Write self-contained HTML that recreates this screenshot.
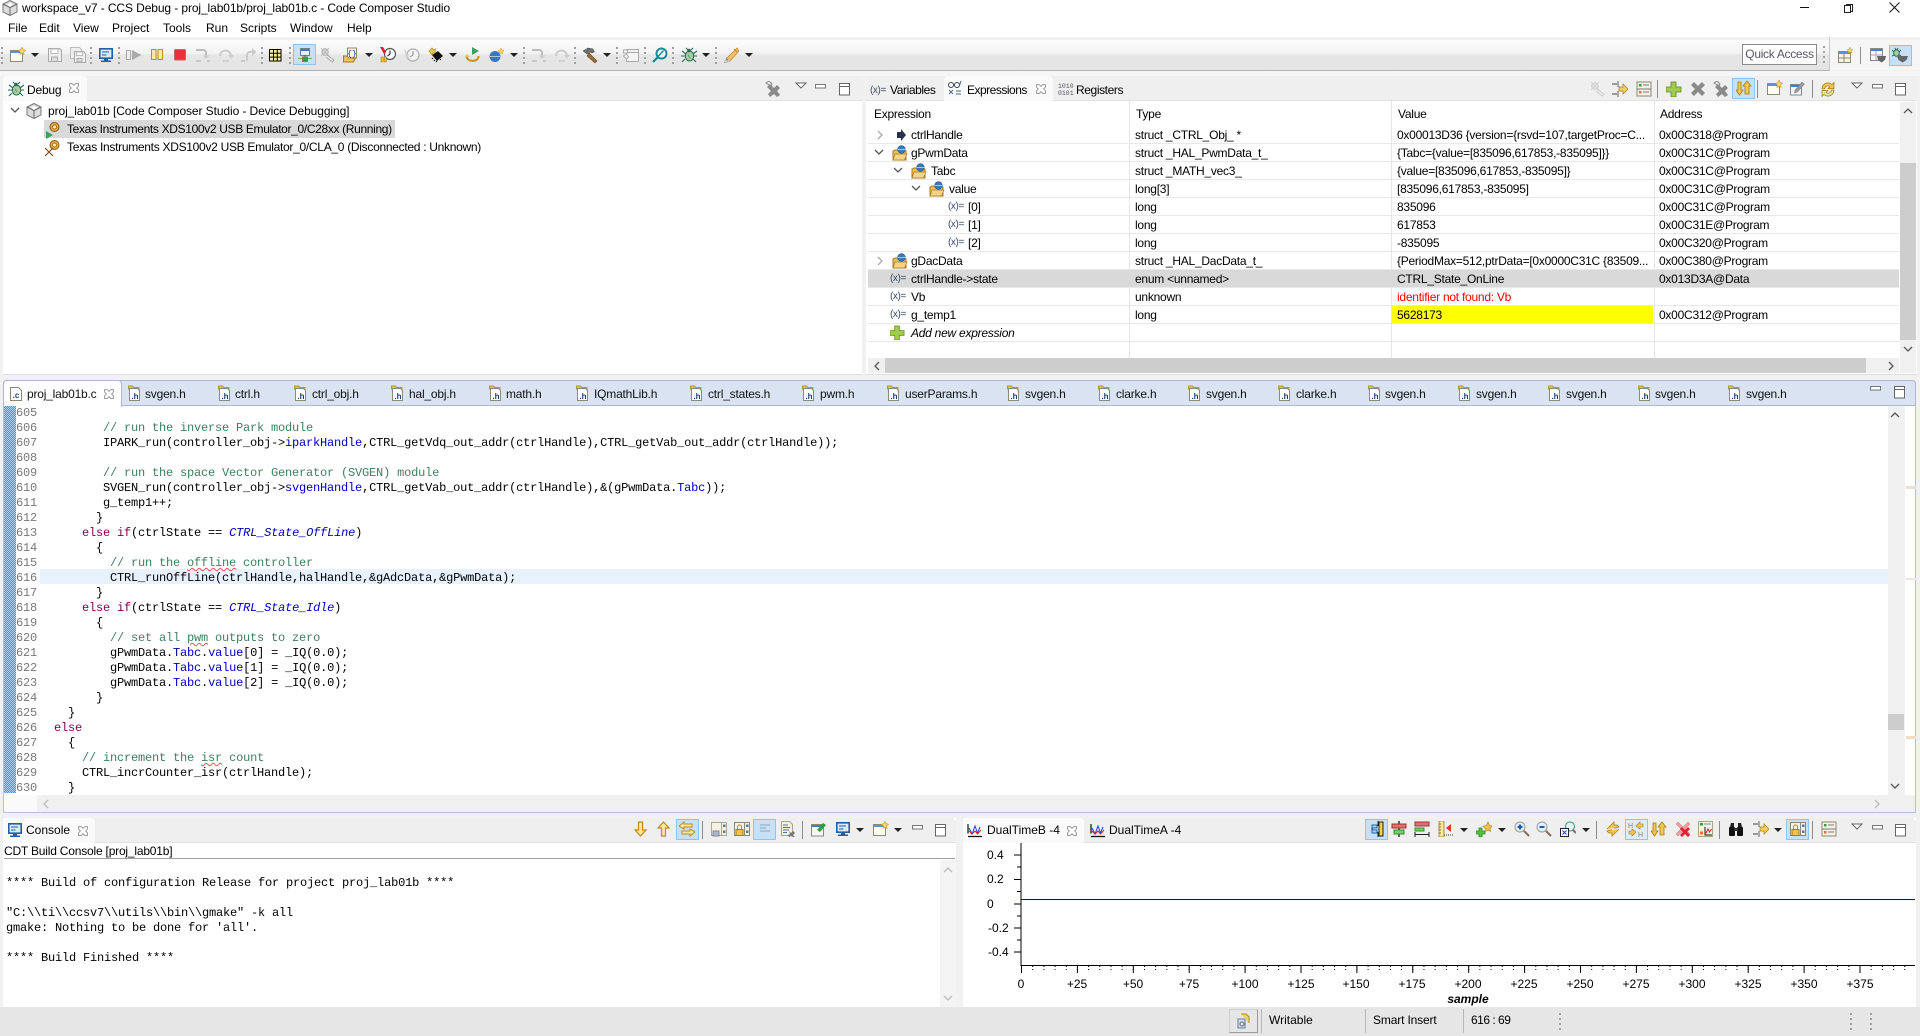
<!DOCTYPE html>
<html><head><meta charset="utf-8"><title>workspace_v7 - CCS Debug</title>
<style>
html,body{margin:0;padding:0}
body{position:relative;width:1920px;height:1036px;overflow:hidden;background:#f1f1f1;font:12px "Liberation Sans",sans-serif;color:#000}
div,span,b,pre,svg{position:absolute}
b{font-weight:normal;white-space:nowrap}
.x{white-space:nowrap}
.i{width:16px;height:16px}
.dd{width:0;height:0;border-left:4px solid transparent;border-right:4px solid transparent;border-top:4px solid #222;margin-left:-4px}
.g{width:2px;height:17px;background:repeating-linear-gradient(#a0a0a0 0 2px,transparent 2px 5px)}
.s{width:1px;background:#8c8c8c}
.sel{background:#c7e0f5;border:1px solid #90c3ee;box-sizing:border-box}
.band{background:#efefef;border-bottom:1px solid #e2e2e2;box-sizing:border-box;border-radius:4px 4px 0 0}
.tab{background:#fafafa;border-radius:4px 4px 0 0}
.r{left:868px;width:1031px;height:17px;border-bottom:1px solid #e8e8e8}
.r b{top:1px;line-height:16px;letter-spacing:-.25px}
.t{left:267px}.v{left:529px}.a{left:791px}
.h{letter-spacing:-.25px}
.vr{font-size:10px;color:#3a4a6a;line-height:16px;white-space:nowrap;top:1px;letter-spacing:-.4px}
pre{margin:0;font:12px/15px "Liberation Mono",monospace;letter-spacing:-.2px}
.c{color:#3f7f5f}.k{color:#7f0055}.f{color:#0000c0}.e{color:#0000c0;font-style:italic}
.w{text-decoration:underline wavy #e55 1px;text-underline-offset:1px}
.et{top:387px;font-size:12px;color:#111;white-space:nowrap;letter-spacing:-.2px}
.ch{top:977px;transform:translateX(-50%);white-space:nowrap}
.yl{left:987px;white-space:nowrap}
</style></head><body>
<svg width="0" height="0" style="left:0;top:0"><defs>
<symbol id="nw" viewBox="0 0 16 16"><rect x=".5" y="3.5" width="12" height="11" fill="#fffdf0" stroke="#8a8a78"/><rect x="1" y="4" width="11" height="2" fill="#5b92d6"/><path d="M12 0l1 2.5 2.5.8-2 1.7.5 2.5-2-1.3-2 1.3.5-2.5-2-1.7 2.5-.8z" fill="#f8d878" stroke="#c89a30" stroke-width=".6"/></symbol>
<symbol id="sv" viewBox="0 0 16 16"><path d="M1.5 1.5h11l2 2v11h-13z" fill="#eee" stroke="#aaa"/><rect x="4" y="2" width="7" height="4.5" fill="#fafafa" stroke="#bbb"/><rect x="4.5" y="10" width="6" height="4.5" fill="#ddd" stroke="#aaa"/></symbol>
<symbol id="sa" viewBox="0 0 16 16"><path d="M.5.5h9l2 2v9h-11z" fill="#eee" stroke="#bbb"/><path d="M4.5 4.5h9l2 2v9h-11z" fill="#eee" stroke="#aaa"/><rect x="6.5" y="5" width="6" height="3.5" fill="#fafafa" stroke="#bbb"/><rect x="7" y="11.5" width="5" height="3.5" fill="#ddd" stroke="#aaa"/></symbol>
<symbol id="tm" viewBox="0 0 16 16"><rect x="1.8" y="1.8" width="12.4" height="9.4" fill="#dce8f5" stroke="#1f5fa5" stroke-width="1.6"/><path d="M4 5h7M4 8h4.5" stroke="#1f5fa5"/><rect x="6" y="12" width="4" height="1.5" fill="#1f5fa5"/><rect x="3" y="13.5" width="10" height="1.5" fill="#1f5fa5"/></symbol>
<symbol id="rs" viewBox="0 0 16 16"><rect x=".5" y="3.5" width="4" height="9" fill="#eee" stroke="#aaa"/><path d="M6 3l9.5 5-9.5 5z" fill="#aaa"/></symbol>
<symbol id="ps" viewBox="0 0 16 16"><rect x="2.5" y="2.5" width="4.5" height="10" fill="#f7e9ab" stroke="#b8901e"/><rect x="9" y="2.5" width="4.5" height="10" fill="#f7e9ab" stroke="#b8901e"/></symbol>
<symbol id="st" viewBox="0 0 16 16"><rect x="2.5" y="2.5" width="11" height="10.5" rx="1" fill="#ea2e3a" stroke="#c8666a"/></symbol>
<symbol id="si" viewBox="0 0 16 16"><path d="M1 3h7a3 3 0 0 1 3 3v3" fill="none" stroke="#bbb" stroke-width="2"/><path d="M7.5 8.5h7l-3.500 3.500z" fill="#ccc"/><path d="M1 14h5M12 14h3" stroke="#aaa"/></symbol>
<symbol id="so" viewBox="0 0 16 16"><path d="M2 9a5.500 5.500 0 0 1 11 0" fill="none" stroke="#ccc" stroke-width="2"/><path d="M10 8h6l-3 3.500z" fill="#ccc"/><path d="M5 14h6" stroke="#bbb"/></symbol>
<symbol id="sr" viewBox="0 0 16 16"><path d="M6 14V8a3 3 0 0 1 3-3h3" fill="none" stroke="#ccc" stroke-width="2"/><path d="M11 1l4.500 4-4.500 4z" fill="#ccc"/><path d="M0 14h4" stroke="#aaa"/></symbol>
<symbol id="gr" viewBox="0 0 16 16"><rect x="2.500" y="2.500" width="11.500" height="11.500" fill="#ffe9a8" stroke="#000"/><path d="M6.500 2.500v11.500M10.300 2.500v11.500M2.500 6.300h11.500M2.500 10.100h11.500" stroke="#000"/></symbol>
<symbol id="cn" viewBox="0 0 16 16"><rect x="3.500" y="1.500" width="9" height="7" fill="#e8eef6" stroke="#6b7f9a"/><rect x="4" y="2" width="8" height="2" fill="#3f78c0"/><path d="M1 11.500h14" stroke="#8a6" stroke-width="1"/><path d="M8 8v3" stroke="#555"/><rect x="5.500" y="10" width="5" height="4.500" fill="#3f9a3f" stroke="#8a7a50"/></symbol>
<symbol id="cd" viewBox="0 0 16 16"><circle cx="5" cy="5" r="3.200" fill="#ddd" stroke="#aaa"/><path d="M1 1l8 8M9 1l-8 8" stroke="#bbb"/><path d="M7 8l7 5-1.500 2-6.500-5" fill="#eee" stroke="#aaa"/></symbol>
<symbol id="op" viewBox="0 0 16 16"><rect x="4.500" y="1" width="9" height="10" fill="#f6f4e6" stroke="#8a8a70"/><text x="9" y="9" font-size="8" text-anchor="middle" fill="#1e50a0" font-family="Liberation Mono">{}</text><path d="M.5 9h4l1 2h6l1 0-2 4h-10z" fill="#eec060" stroke="#a87a20"/></symbol>
<symbol id="ck" viewBox="0 0 16 16"><circle cx="10" cy="7" r="5.500" fill="#fff" stroke="#555" stroke-width="1.200"/><path d="M10 3.500v3.500l-2.500 2" fill="none" stroke="#111"/><path d="M0 0l4 7 2-2-3-5z" fill="#e0202c"/><rect x="1" y="10" width="2.200" height="5" fill="#eec040" stroke="#a07a10" stroke-width=".5"/><rect x="4.200" y="10" width="2.200" height="5" fill="#eec040" stroke="#a07a10" stroke-width=".5"/></symbol>
<symbol id="k2" viewBox="0 0 16 16"><circle cx="9" cy="8" r="6" fill="#f4f4f4" stroke="#aaa" stroke-width="1.200"/><path d="M9 4v4l-3 2" fill="none" stroke="#888"/><path d="M0 2l5 6-2 5z" fill="#ccc"/></symbol>
<symbol id="ch" viewBox="0 0 16 16"><path d="M4 8l6-4 5 5-6 5z" fill="#111"/><path d="M5 11l-1 1M7 13l-1 1M9 14l-1 1M12 12l1 1" stroke="#111"/><path d="M1 4l3-3 1.500 2 2-1-.5 3-2 1-1 2z" fill="#f0c848" stroke="#b08a20" stroke-width=".7"/></symbol>
<symbol id="ga" viewBox="0 0 16 16"><path d="M7 0l7 4-7 4z" fill="#3ca060"/><path d="M1.500 9c0 6 12 7 12 0" fill="none" stroke="#c8901e" stroke-width="2"/><path d="M0 10l2-3 2.500 3z" fill="#eec050"/></symbol>
<symbol id="bl" viewBox="0 0 16 16"><circle cx="6" cy="9.500" r="5.500" fill="#3c78b8"/><path d="M.8 9.500h10.400" stroke="#a8c8e8"/><path d="M12 1l1 2 2 .7-1.600 1.300.4 2-1.800-1-1.800 1 .4-2-1.600-1.300 2-.7z" fill="#f8d878" stroke="#c89a30" stroke-width=".5"/></symbol>
<symbol id="hm" viewBox="0 0 16 16"><path d="M1 4l5-3 5 1 1.500 3-3 1-1.500-1-3 2z" fill="#6e6e6e" stroke="#444" stroke-width=".5"/><path d="M7 6l8 8-2 2-8-7z" fill="#9a6a38" stroke="#6e4820" stroke-width=".6"/></symbol>
<symbol id="wd" viewBox="0 0 16 16"><rect x="3.500" y="2.500" width="12" height="12" fill="#f4f4f4" stroke="#aaa"/><path d="M3.500 5.500h12" stroke="#aaa"/><path d="M.5 3h4v3h-4zM.5 9l3-2 2 3-2 2z" fill="#fff" stroke="#aaa"/></symbol>
<symbol id="sc" viewBox="0 0 16 16"><circle cx="9.500" cy="6.500" r="5" fill="#fff" stroke="#178a9a" stroke-width="2"/><path d="M6 9.500l5.500-6" stroke="#178a9a" stroke-width="1.500"/><path d="M5.500 10.500l-4.500 4.500" stroke="#178a9a" stroke-width="2.200"/></symbol>
<symbol id="bg" viewBox="0 0 16 16"><ellipse cx="8.500" cy="9" rx="4.200" ry="5" fill="#a6cf98" stroke="#2c6a60"/><circle cx="8" cy="3.500" r="1.800" fill="#2c6a60"/><path d="M1 4l4 3M16 4l-4 3M0 9h4M16 9h-3M1 15l3-3M15 15l-3-3M5 1l2 2M12 1l-2 2" stroke="#2c6a60" stroke-width="1.100"/><path d="M7 8l2 3" stroke="#5a9070"/></symbol>
<symbol id="pn" viewBox="0 0 16 16"><path d="M14 1l2 3-9 10-3-3z" fill="#f2c068" stroke="#c08020" stroke-width=".7"/><path d="M11 2l3 3" stroke="#c08020"/><path d="M4 10.500l3 3.500-6 2z" fill="#f4e2c0" stroke="#aaa" stroke-width=".7"/><path d="M3 11l2 1-1 3z" fill="#777"/></symbol>
<symbol id="pr" viewBox="0 0 16 16"><rect x=".5" y="4.500" width="12" height="11" fill="#f8f4e4" stroke="#8a8a70"/><rect x="1" y="5" width="11" height="2" fill="#5b92d6"/><path d="M6 7v8M1 11h11" stroke="#8a8a70"/><path d="M12 0l1 2 2 .7-1.500 1.300.4 2-1.900-1-1.900 1 .4-2-1.500-1.300 2-.7z" fill="#f8d878" stroke="#c89a30" stroke-width=".5"/></symbol>
<symbol id="p2" viewBox="0 0 16 16"><rect x=".5" y="1.500" width="12" height="12" fill="#f8f8f8" stroke="#8a8a8a"/><rect x="1" y="2" width="11" height="2" fill="#4a82c8"/><path d="M6 4v9M1 8h11" stroke="#aaa"/><path d="M7 9h9l-1 4-3.500 2.500L8 13z" fill="#666"/></symbol>
<symbol id="p3" viewBox="0 0 16 16"><ellipse cx="4.500" cy="6" rx="2.800" ry="3.300" fill="#a6cf98" stroke="#2c6a60"/><path d="M0 3l2 2M9 3L7 5M0 9l2-1M9 9L7 8M3 1l1 2M6 1L5 3" stroke="#2c6a60"/><path d="M5 9h11l-1.500 4-4 2.500-4-2.500z" fill="#666"/></symbol>
<symbol id="cl" viewBox="0 0 16 16"><path d="M3 3h3l2 2 2-2h3v3l-2 2 2 2v3h-3l-2-2-2 2H3v-3l2-2-2-2z" fill="#fff" stroke="#8a8a8a"/></symbol>
<symbol id="mn" viewBox="0 0 16 16"><rect x="2.500" y="5.500" width="10" height="3.500" fill="#fff" stroke="#777"/></symbol>
<symbol id="mx" viewBox="0 0 16 16"><rect x="2.500" y="2.500" width="10" height="11.500" fill="#fff" stroke="#666"/><path d="M2.500 5.500h10" stroke="#666"/></symbol>
<symbol id="vm" viewBox="0 0 16 16"><path d="M3 5h10l-5 5z" fill="#fff" stroke="#666"/></symbol>
<symbol id="xx" viewBox="0 0 16 16"><path d="M1 4l3-3 4 4 4-4 3 3-4 4 4 4-3 3-4-4-4 4-3-3 4-4z" fill="#8a8a8a"/></symbol>
<symbol id="x2" viewBox="0 0 16 16"><path d="M1 2l3-2 3 3-1 2z" fill="#f0f0f0" stroke="#888"/><path d="M2 6l3-3 4 4 3-3 3 3-3 3 3 4-3 2-3-3-4 3-2-3 3-3z" fill="#8a8a8a"/></symbol>
<symbol id="pl" viewBox="0 0 16 16"><path d="M5 1h5v5h5v5h-5v5H5v-5H0V6h5z" fill="#9fcb50" stroke="#5a8a20" stroke-width=".8"/></symbol>
<symbol id="dn" viewBox="0 0 16 16"><path d="M5.500 1h4v8h3.500l-5.500 6-5.500-6h3.500z" fill="#fde8a0" stroke="#c08a18" stroke-width="1.200"/></symbol>
<symbol id="up" viewBox="0 0 16 16"><path d="M5.500 15h4V7h3.500L7.500 1 2 7h3.500z" fill="#fde8a0" stroke="#c08a18" stroke-width="1.200"/></symbol>
<symbol id="lk" viewBox="0 0 16 16"><path d="M0 5l5-4v2h8v3H5v2zM16 11l-5 4v-2H3v-3h8V8z" fill="#fde8a0" stroke="#c08a18"/></symbol>
<symbol id="cs" viewBox="0 0 16 16"><rect x=".5" y="1.500" width="15" height="13" fill="#f6f2e0" stroke="#aaa890"/><path d="M10.500 1.500v13" stroke="#aaa890"/><rect x="12" y="3.500" width="2.500" height="2.500" fill="#5a7a9a"/><rect x="12" y="9.500" width="2.500" height="2.500" fill="#5a7a9a"/><path d="M2 10h6v5H2z" fill="#aab8cc" stroke="#889"/></symbol>
<symbol id="cb" viewBox="0 0 16 16"><rect x=".5" y="1.500" width="15" height="13" fill="#f6f2e0" stroke="#8a8a70"/><path d="M10.500 1.500v13" stroke="#8a8a70"/><rect x="12" y="3.500" width="2.500" height="2.500" fill="#5a7a9a"/><rect x="12" y="9.500" width="2.500" height="2.500" fill="#5a7a9a"/><path d="M3.500 9V6a2 2 0 0 1 4 0v3" fill="none" stroke="#b8860b"/><rect x="2" y="8.500" width="7" height="6" fill="#f0c050" stroke="#a87a10"/></symbol>
<symbol id="ln" viewBox="0 0 16 16"><path d="M3 4h10M3 7h6M3 10h10" stroke="#8da4bc"/></symbol>
<symbol id="ds" viewBox="0 0 16 16"><path d="M1.500.5h8l3 3v11h-11z" fill="#f6f2e0" stroke="#a8a488"/><path d="M3 4h5M3 6.500h7M3 9h6M3 11.500h4" stroke="#4a72a8"/><path d="M9 10l2 2 2-2 2 2-2 2 2 2h-2l-2-1-2 1-1-2 2-1z" fill="#777"/></symbol>
<symbol id="pn2" viewBox="0 0 16 16"><rect x=".5" y="3.500" width="12" height="11.500" fill="#f4f8fc" stroke="#8a8a70"/><rect x="1" y="4" width="11" height="2" fill="#3f7ec2"/><path d="M6 9l6-7 3 2-6 7z" fill="#2ca040"/></symbol>
<symbol id="pn3" viewBox="0 0 16 16"><rect x=".5" y="4.500" width="11" height="10.500" fill="#f4f8fc" stroke="#7a8a9a"/><rect x="1" y="5" width="10" height="2" fill="#3f7ec2"/><path d="M5 10l7-8 2.500 2-7 8-3 1z" fill="#999" stroke="#777" stroke-width=".5"/></symbol>
<symbol id="sy" viewBox="0 0 16 16"><path d="M2 8a6 6 0 0 1 10-4.500l2-2v6h-6l2-2A3.500 3.500 0 0 0 4.500 8z" fill="#f2c850" stroke="#9a7a10" stroke-width=".7"/><path d="M14 9a6 6 0 0 1-10 4.500l-2 2v-6h6l-2 2a3.500 3.500 0 0 0 5.500-2.500z" fill="#dfe8a0" stroke="#9a7a10" stroke-width=".7"/></symbol>
<symbol id="ud" viewBox="0 0 16 16"><path d="M2 15V7H0l3.500-5L7 7H5v8z" transform="rotate(180 3.500 8.500)" fill="#f2c850" stroke="#a87a10" stroke-width=".8"/><path d="M9 14V6H7l4-5 4 5h-2v8z" fill="#f2c850" stroke="#a87a10" stroke-width=".8"/></symbol>
<symbol id="t1" viewBox="0 0 16 16"><path d="M1 2v9.500M1 14.500h14" stroke="#111" stroke-width="1.200"/><path d="M2 6l3 6 3-8 2.500 7L13 5" fill="none" stroke="#2040d0" stroke-width="1"/><path d="M2 9l3 3 3-3 2.500 3L14 8" fill="none" stroke="#d02020"/></symbol>
<symbol id="hc" viewBox="0 0 16 16"><path d="M9 0v5M9 11v5" stroke="#222"/><path d="M8 4H3v3h5zM8 9H3v3h5z" fill="#a6d0f0" stroke="#2068b0"/><rect x="10" y="1" width="4" height="14" fill="#f2d040" stroke="#222"/><path d="M3 7v2" stroke="#222"/></symbol>
<symbol id="al" viewBox="0 0 16 16"><path d="M8 0v16" stroke="#222" stroke-width="1.400"/><rect x="1" y="3" width="14" height="4" fill="#e07070" stroke="#a03030"/><rect x="3" y="9" width="10" height="4" fill="#70d060" stroke="#309030"/></symbol>
<symbol id="ar" viewBox="0 0 16 16"><rect x="1" y="1" width="14" height="4" fill="#e07070" stroke="#a03030"/><rect x="1" y="7" width="9" height="3" fill="#70d060" stroke="#309030"/><path d="M1 13.500h14M1 11v5M15 11v5" stroke="#222"/></symbol>
<symbol id="rl" viewBox="0 0 16 16"><rect x="1" y="0" width="5" height="16" fill="#f6e6a0" stroke="#b09040"/><path d="M1 3h2M1 6h2M1 9h2M1 12h2" stroke="#907020"/><path d="M13 3v8l-5-4z" fill="#e03030"/><path d="M6 14h10" stroke="#333" stroke-dasharray="1 1"/></symbol>
<symbol id="ap" viewBox="0 0 16 16"><path d="M12 1l1.500 3.500 3 .5-2.500 2.200.5 3.300-2.500-1.500-2 1.200-1-3-2-2 3-.5z" fill="#f2c050" stroke="#b08010" stroke-width=".6"/><path d="M3 7h3v3h3v3H6v3H3v-3H0v-3h3z" fill="#58c048" stroke="#2a8a20" stroke-width=".8"/></symbol>
<symbol id="zi" viewBox="0 0 16 16"><circle cx="6" cy="6" r="5" fill="#e8f0f8" stroke="#999"/><path d="M3.500 6h5M6 3.500v5" stroke="#1060b0" stroke-width="2"/><path d="M10 10l5 5" stroke="#8a6a50" stroke-width="2"/></symbol>
<symbol id="zo" viewBox="0 0 16 16"><circle cx="6" cy="6" r="5" fill="#e8f0f8" stroke="#999"/><path d="M3.500 6h5" stroke="#1060b0" stroke-width="2"/><path d="M10 10l5 5" stroke="#8a6a50" stroke-width="2"/></symbol>
<symbol id="zf" viewBox="0 0 16 16"><circle cx="10" cy="5.500" r="4.500" fill="#e8f4f0" stroke="#3a8a80"/><path d="M13 9l3 3" stroke="#8a6a50" stroke-width="2"/><rect x=".5" y="7.500" width="8" height="8" fill="#fff" stroke="#223"/><path d="M2.500 9.500l4 4M6.500 9.500l-4 4" stroke="#2040c0"/></symbol>
<symbol id="s2" viewBox="0 0 16 16"><path d="M2 8L9 1v3h3l2 2-3 1H9" fill="#f2c850" stroke="#a87a10" stroke-width=".7"/><path d="M14 8l-7 7v-3H4L2 10l3-1h2" fill="#f2c850" stroke="#a87a10" stroke-width=".7"/></symbol>
<symbol id="hh" viewBox="0 0 16 16"><text x="0" y="7" font-size="7" fill="#a08040" font-family="Liberation Sans">H</text><text x="10" y="16" font-size="7" fill="#a08040" font-family="Liberation Sans">H</text><path d="M8 5l4-4v2h3v3h-3v2z" fill="#f2c850" stroke="#a87a10" stroke-width=".6"/><path d="M8 11l-4 4v-2H1v-3h3V8z" fill="#f2c850" stroke="#a87a10" stroke-width=".6"/></symbol>
<symbol id="rx" viewBox="0 0 16 16"><path d="M1 3l2-2 5 5 5-5 2 2-5 5 5 5-2 2-5-5-5 5-2-2 5-5z" fill="#f0a0a0" stroke="#d07070" stroke-width=".5"/><path d="M5 8l2-2 3 3 3-3 2 2-3 3 3 3-2 2-3-3-3 3-2-2 3-3z" fill="#e02030"/></symbol>
<symbol id="gp" viewBox="0 0 16 16"><rect x=".5" y=".5" width="14" height="15" fill="#f0f4e8" stroke="#a8a488"/><rect x="2" y="2" width="3" height="2.500" fill="#3a9a4a"/><path d="M6 3h7" stroke="#889"/><rect x="2" y="10.500" width="3" height="3" fill="#e07050"/><path d="M7 6v8h7" fill="none" stroke="#111"/><path d="M8 12l2-4 1.500 3 2-3" fill="none" stroke="#d02020"/></symbol>
<symbol id="bn" viewBox="0 0 16 16"><path d="M2 6l1-4h3v4zM14 6l-1-4h-3v4z" fill="#222"/><rect x="1" y="6" width="6" height="9" rx="1" fill="#111"/><rect x="9" y="6" width="6" height="9" rx="1" fill="#111"/><rect x="6" y="7" width="4" height="3" fill="#333"/></symbol>
<symbol id="aa" viewBox="0 0 16 16"><path d="M0 3h5M0 13h5" stroke="#444"/><path d="M6 0v6M6 10v6" stroke="#666"/><path d="M7 6h4V3l5 5-5 5v-3H7z" fill="#f2d060" stroke="#a87a10" stroke-width=".7"/></symbol>
<symbol id="pi" viewBox="0 0 16 16"><rect x="1" y="1" width="14" height="14" fill="#f6f2e0" stroke="#8a8a70"/><rect x="3" y="3" width="2.500" height="2.500" fill="#3a9a4a"/><path d="M7 4h6" stroke="#778"/><rect x="3" y="10" width="2.500" height="2.500" fill="#e07050"/><path d="M7 11h6M1 8h14" stroke="#778"/></symbol>
<symbol id="cu" viewBox="0 0 16 16"><path d="M8 .5l7 3.500v8l-7 3.500-7-3.500V4z" fill="#ddd" stroke="#777"/><path d="M8 7.500L1 4M8 7.500l7-3.500M8 7.500v8" stroke="#666"/><path d="M5 5l3-2 3 2-3 2z" fill="#fff"/></symbol>
<symbol id="ti" viewBox="0 0 16 16"><circle cx="9.500" cy="6" r="4.500" fill="#e8a840" stroke="#8a5a10"/><circle cx="9.500" cy="6" r="2" fill="#f8e8a0" stroke="#8a5a10" stroke-width=".7"/></symbol>
<symbol id="hf" viewBox="0 0 16 16"><path d="M2.500 4.500V1h4l1.500 1.500h5v3" fill="#eec050" stroke="#a88420" stroke-width=".8"/><path d="M3.500 3.500h8l2 2v10h-10z" fill="#fff" stroke="#8a8a7a"/><text x="9" y="14" font-size="8" font-weight="bold" text-anchor="middle" fill="#1e3c78" font-family="Liberation Sans">.h</text></symbol>
<symbol id="cf" viewBox="0 0 16 16"><path d="M2.500 1.500h8l3 3v10h-11z" fill="#fff" stroke="#8a8a7a"/><text x="8" y="12" font-size="8" font-weight="bold" text-anchor="middle" fill="#1e3c78" font-family="Liberation Sans">.c</text></symbol>
<symbol id="st2" viewBox="0 0 16 16"><path d="M1 15V6l2-1h3v1h8v9z" fill="#eebe58" stroke="#a87a20"/><circle cx="9.500" cy="4.500" r="3.800" fill="#3c78b8" stroke="#224e80" stroke-width=".6"/><path d="M5.700 4.500h7.600" stroke="#a8c8e8"/><path d="M1 15l2-6h12l-2.500 6z" fill="#f4d488" stroke="#a87a20" stroke-width=".7"/></symbol>
<symbol id="pt" viewBox="0 0 16 16"><path d="M4 5h4V2l5 6-5 6v-3H4z" fill="#24324e"/></symbol>
<symbol id="ex" viewBox="0 0 16 16"><circle cx="4" cy="4" r="2.500" fill="none" stroke="#345"/><circle cx="10" cy="4" r="2.500" fill="none" stroke="#345"/><path d="M14 0l-2 6M2 9l4 4M6 9l-4 4M9 10h5M9 13h5" stroke="#4a6a8a"/></symbol>
<symbol id="rg" viewBox="0 0 16 16"><text x="0" y="7" font-size="6.500" fill="#556" font-family="Liberation Mono">1010</text><text x="0" y="14" font-size="6.500" fill="#556" font-family="Liberation Mono">0101</text></symbol>
<symbol id="stat" viewBox="0 0 16 16"><path d="M2 6h7v9H2z" fill="#d0e0f0" stroke="#6080a0"/><path d="M5 1l5 0 3 3v6" fill="#f0d070" stroke="#b08a20"/><circle cx="6" cy="11" r="2" fill="#e8e8e8" stroke="#666"/></symbol>
</defs></svg>

<!-- title bar -->
<div style="left:0;top:0;width:1920px;height:37px;background:#fff"></div>
<svg class="i" style="left:2px;top:0"><use href="#cu"/></svg>
<div class="x" style="left:22px;top:1px;line-height:15px;letter-spacing:-.1px">workspace_v7 - CCS Debug - proj_lab01b/proj_lab01b.c - Code Composer Studio</div>
<div style="left:1800px;top:7px;width:9px;height:1px;background:#111"></div>
<div style="left:1846px;top:4px;width:7px;height:8px;border:1px solid #222;background:#fff;box-sizing:border-box"></div>
<div style="left:1844px;top:5px;width:7px;height:8px;border:1px solid #222;background:#fff;box-sizing:border-box"></div>
<svg style="left:1889px;top:2px;width:11px;height:11px"><path d="M.5.500l10 10M10.500.500l-10 10" stroke="#111"/></svg>
<b style="left:8px;top:21px;line-height:15px">File</b><b style="left:39px;top:21px;line-height:15px">Edit</b><b style="left:73px;top:21px;line-height:15px">View</b><b style="left:112px;top:21px;line-height:15px">Project</b><b style="left:163px;top:21px;line-height:15px">Tools</b><b style="left:206px;top:21px;line-height:15px">Run</b><b style="left:240px;top:21px;line-height:15px">Scripts</b><b style="left:290px;top:21px;line-height:15px">Window</b><b style="left:347px;top:21px;line-height:15px">Help</b>

<!-- main toolbar -->
<div style="left:0;top:37px;width:1920px;height:3px;background:#f1f1f1"></div>
<div style="left:0;top:40px;width:1829px;height:30px;background:linear-gradient(#fdfdfd 0,#f2f2f2 45%,#e6e6e6 50%,#e4e4e4 100%)"></div>
<div style="left:1829px;top:40px;width:91px;height:30px;background:#f6f6f6"></div>
<div style="left:0;top:70px;width:1829px;height:1px;background:#b2b2b2"></div>
<div style="left:1829px;top:37px;width:1px;height:34px;background:#c8c8c8"></div>
<div class="g" style="left:1px;top:47px"></div>
<svg class="i" style="left:10px;top:47px"><use href="#nw"/></svg><div class="dd" style="left:35px;top:53px"></div>
<svg class="i" style="left:47px;top:47px"><use href="#sv"/></svg><svg class="i" style="left:70px;top:47px"><use href="#sa"/></svg>
<div class="g" style="left:90px;top:47px"></div>
<svg class="i" style="left:98px;top:47px"><use href="#tm"/></svg>
<div class="g" style="left:118px;top:47px"></div>
<svg class="i" style="left:126px;top:47px"><use href="#rs"/></svg><svg class="i" style="left:149px;top:47px"><use href="#ps"/></svg><svg class="i" style="left:172px;top:47px"><use href="#st"/></svg>
<svg class="i" style="left:195px;top:47px"><use href="#si"/></svg><svg class="i" style="left:218px;top:47px"><use href="#so"/></svg><svg class="i" style="left:241px;top:47px"><use href="#sr"/></svg>
<div class="g" style="left:261px;top:47px"></div>
<svg class="i" style="left:267px;top:47px"><use href="#gr"/></svg>
<div class="g" style="left:289px;top:47px"></div>
<div class="sel" style="left:293px;top:44px;width:23px;height:21px"></div><svg class="i" style="left:297px;top:47px"><use href="#cn"/></svg>
<svg class="i" style="left:320px;top:47px"><use href="#cd"/></svg>
<svg class="i" style="left:343px;top:47px"><use href="#op"/></svg><div class="dd" style="left:369px;top:53px"></div>
<svg class="i" style="left:380px;top:47px"><use href="#ck"/></svg><svg class="i" style="left:404px;top:47px"><use href="#k2"/></svg>
<svg class="i" style="left:428px;top:47px"><use href="#ch"/></svg><div class="dd" style="left:453px;top:53px"></div>
<svg class="i" style="left:465px;top:47px"><use href="#ga"/></svg><svg class="i" style="left:489px;top:47px"><use href="#bl"/></svg><div class="dd" style="left:514px;top:53px"></div>
<div class="g" style="left:523px;top:47px"></div>
<svg class="i" style="left:531px;top:47px"><use href="#si"/></svg><svg class="i" style="left:554px;top:47px"><use href="#so"/></svg>
<div class="g" style="left:574px;top:47px"></div>
<svg class="i" style="left:582px;top:47px"><use href="#hm"/></svg><div class="dd" style="left:607px;top:53px"></div>
<div class="g" style="left:616px;top:47px"></div>
<svg class="i" style="left:623px;top:47px"><use href="#wd"/></svg>
<div class="g" style="left:644px;top:47px"></div>
<svg class="i" style="left:652px;top:47px"><use href="#sc"/></svg>
<div class="g" style="left:672px;top:47px"></div>
<svg class="i" style="left:681px;top:47px"><use href="#bg"/></svg><div class="dd" style="left:706px;top:53px"></div>
<div class="g" style="left:715px;top:47px"></div>
<svg class="i" style="left:723px;top:47px"><use href="#pn"/></svg><div class="dd" style="left:749px;top:53px"></div>
<div style="left:1742px;top:44px;width:75px;height:21px;border:1px solid #8a8a8a;background:#fff;box-sizing:border-box;line-height:19px;text-align:center;color:#556;white-space:nowrap;font-size:12px;letter-spacing:-.3px">Quick Access</div>
<div class="g" style="left:1823px;top:46px"></div>
<svg class="i" style="left:1838px;top:47px"><use href="#pr"/></svg>
<div class="s" style="left:1860px;top:47px;height:17px"></div>
<svg class="i" style="left:1870px;top:47px"><use href="#p2"/></svg>
<div class="sel" style="left:1889px;top:45px;width:23px;height:21px"></div><svg class="i" style="left:1892px;top:47px"><use href="#p3"/></svg>

<!-- strip -->
<div style="left:0;top:71px;width:1920px;height:5px;background:#f6f6f6"></div>

<!-- Debug pane -->
<div style="left:3px;top:76px;width:859px;height:299px;background:#fff;border-radius:4px 4px 0 0;border-bottom:1px solid #dedede;box-sizing:border-box"></div>
<div class="band" style="left:3px;top:76px;width:859px;height:25px"></div>
<div class="tab" style="left:3px;top:76px;width:84px;height:25px"></div>
<svg class="i" style="left:8px;top:81px"><use href="#bg"/></svg>
<b style="left:27px;top:83px;line-height:15px;letter-spacing:-.2px">Debug</b>
<svg class="i" style="left:67px;top:81px;width:14px;height:14px"><use href="#cl"/></svg>
<svg class="i" style="left:765px;top:81px"><use href="#x2"/></svg>
<svg class="i" style="left:793px;top:78px"><use href="#vm"/></svg>
<svg class="i" style="left:813px;top:79px"><use href="#mn"/></svg>
<svg class="i" style="left:837px;top:81px"><use href="#mx"/></svg>
<svg style="left:10px;top:107px;width:10px;height:8px"><path d="M1 1l4 4 4-4" fill="none" stroke="#555" stroke-width="1.300"/></svg>
<svg class="i" style="left:26px;top:103px"><use href="#cu"/></svg>
<b style="left:48px;top:104px;line-height:15px;letter-spacing:-.09px">proj_lab01b [Code Composer Studio - Device Debugging]</b>
<div style="left:44px;top:120px;width:351px;height:18px;background:#d9d9d9"></div>
<svg class="i" style="left:45px;top:121px"><use href="#ti"/></svg><svg style="left:45px;top:130px;width:9px;height:9px"><path d="M1 1l7 4-7 4z" fill="#3ca060"/></svg>
<b style="left:67px;top:122px;line-height:15px;letter-spacing:-.34px">Texas Instruments XDS100v2 USB Emulator_0/C28xx (Running)</b>
<svg class="i" style="left:45px;top:139px"><use href="#ti"/></svg><svg style="left:44px;top:147px;width:10px;height:10px"><path d="M1 1l8 8M9 1l-8 8" stroke="#8a4a20" stroke-width="1.200"/></svg>
<b style="left:67px;top:140px;line-height:15px;letter-spacing:-.29px">Texas Instruments XDS100v2 USB Emulator_0/CLA_0 (Disconnected : Unknown)</b>

<!-- Expressions pane -->
<div style="left:866px;top:76px;width:1051px;height:299px;background:#fff;border-radius:4px 4px 0 0;border-bottom:1px solid #dedede;box-sizing:border-box"></div>
<div class="band" style="left:866px;top:76px;width:1051px;height:25px"></div>
<div class="tab" style="left:944px;top:76px;width:109px;height:25px"></div>
<span class="vr" style="left:870px;top:83px;line-height:15px">(x)=</span>
<b style="left:890px;top:83px;line-height:15px;letter-spacing:-.4px">Variables</b>
<svg class="i" style="left:947px;top:81px"><use href="#ex"/></svg>
<b style="left:967px;top:83px;line-height:15px;letter-spacing:-.5px">Expressions</b>
<svg class="i" style="left:1034px;top:82px;width:14px;height:14px"><use href="#cl"/></svg>
<svg class="i" style="left:1058px;top:81px"><use href="#rg"/></svg>
<b style="left:1076px;top:83px;line-height:15px;letter-spacing:-.4px">Registers</b>
<svg class="i" style="left:1590px;top:81px;opacity:.5"><use href="#cd"/></svg>
<svg class="i" style="left:1612px;top:81px"><use href="#aa"/></svg>
<svg class="i" style="left:1636px;top:81px"><use href="#pi"/></svg>
<div class="s" style="left:1657px;top:80px;height:18px"></div>
<svg class="i" style="left:1666px;top:81px"><use href="#pl"/></svg>
<svg class="i" style="left:1690px;top:81px"><use href="#xx"/></svg>
<svg class="i" style="left:1713px;top:81px"><use href="#x2"/></svg>
<div class="sel" style="left:1732px;top:78px;width:23px;height:21px"></div><svg class="i" style="left:1736px;top:80px"><use href="#ud"/></svg>
<div class="s" style="left:1757px;top:80px;height:18px"></div>
<svg class="i" style="left:1767px;top:80px"><use href="#nw"/></svg>
<svg class="i" style="left:1790px;top:80px"><use href="#pn3"/></svg>
<div class="s" style="left:1812px;top:80px;height:18px"></div>
<svg class="i" style="left:1820px;top:81px"><use href="#sy"/></svg>
<svg class="i" style="left:1849px;top:78px"><use href="#vm"/></svg>
<svg class="i" style="left:1870px;top:79px"><use href="#mn"/></svg>
<svg class="i" style="left:1893px;top:81px"><use href="#mx"/></svg>
<!-- columns -->
<div style="left:1129px;top:101px;width:1px;height:257px;background:#e6e6e6"></div>
<div style="left:1391px;top:101px;width:1px;height:257px;background:#e6e6e6"></div>
<div style="left:1654px;top:101px;width:1px;height:257px;background:#e6e6e6"></div>
<b class="h" style="left:874px;top:107px;line-height:15px">Expression</b><b class="h" style="left:1136px;top:107px;line-height:15px">Type</b><b class="h" style="left:1398px;top:107px;line-height:15px">Value</b><b class="h" style="left:1660px;top:107px;line-height:15px">Address</b>

<div class="r" style="top:126px"><b style="left:43px">ctrlHandle</b><b class="t">struct _CTRL_Obj_ *</b><b class="v">0x00013D36 {version={rsvd=107,targetProc=C...</b><b class="a">0x00C318@Program</b></div>
<div class="r" style="top:144px"><b style="left:43px">gPwmData</b><b class="t">struct _HAL_PwmData_t_</b><b class="v">{Tabc={value=[835096,617853,-835095]}}</b><b class="a">0x00C31C@Program</b></div>
<div class="r" style="top:162px"><b style="left:63px">Tabc</b><b class="t">struct _MATH_vec3_</b><b class="v">{value=[835096,617853,-835095]}</b><b class="a">0x00C31C@Program</b></div>
<div class="r" style="top:180px"><b style="left:81px">value</b><b class="t">long[3]</b><b class="v">[835096,617853,-835095]</b><b class="a">0x00C31C@Program</b></div>
<div class="r" style="top:198px"><span class="vr" style="left:80px">(x)=</span><b style="left:100px">[0]</b><b class="t">long</b><b class="v">835096</b><b class="a">0x00C31C@Program</b></div>
<div class="r" style="top:216px"><span class="vr" style="left:80px">(x)=</span><b style="left:100px">[1]</b><b class="t">long</b><b class="v">617853</b><b class="a">0x00C31E@Program</b></div>
<div class="r" style="top:234px"><span class="vr" style="left:80px">(x)=</span><b style="left:100px">[2]</b><b class="t">long</b><b class="v">-835095</b><b class="a">0x00C320@Program</b></div>
<div class="r" style="top:252px"><b style="left:43px">gDacData</b><b class="t">struct _HAL_DacData_t_</b><b class="v">{PeriodMax=512,ptrData=[0x0000C31C {83509...</b><b class="a">0x00C380@Program</b></div>
<div class="r" style="top:270px;background:#d9d9d9"><span class="vr" style="left:22px">(x)=</span><b style="left:43px">ctrlHandle-&gt;state</b><b class="t">enum &lt;unnamed&gt;</b><b class="v">CTRL_State_OnLine</b><b class="a">0x013D3A@Data</b></div>
<div class="r" style="top:288px"><span class="vr" style="left:22px">(x)=</span><b style="left:43px">Vb</b><b class="t">unknown</b><b class="v" style="color:#f00">identifier not found: Vb</b></div>
<div class="r" style="top:306px"><div style="left:524px;top:0;width:261px;height:17px;background:#ff0"></div><span class="vr" style="left:22px">(x)=</span><b style="left:43px">g_temp1</b><b class="t">long</b><b class="v">5628173</b><b class="a">0x00C312@Program</b></div>
<div class="r" style="top:324px"><svg class="i" style="left:22px;top:1px;width:15px;height:15px"><use href="#pl"/></svg><b style="left:43px;font-style:italic">Add new expression</b></div>
<div class="r" style="top:342px;height:15px;border-bottom:0"></div>
<!-- tree chevrons & icons -->
<svg style="left:876px;top:130px;width:8px;height:10px"><path d="M2 1l4 4-4 4" fill="none" stroke="#aaa" stroke-width="1.300"/></svg>
<svg class="i" style="left:893px;top:127px"><use href="#pt"/></svg>
<svg style="left:874px;top:149px;width:10px;height:8px"><path d="M1 1l4 4 4-4" fill="none" stroke="#555" stroke-width="1.300"/></svg>
<svg class="i" style="left:892px;top:145px"><use href="#st2"/></svg>
<svg style="left:893px;top:167px;width:10px;height:8px"><path d="M1 1l4 4 4-4" fill="none" stroke="#555" stroke-width="1.300"/></svg>
<svg class="i" style="left:911px;top:163px"><use href="#st2"/></svg>
<svg style="left:911px;top:185px;width:10px;height:8px"><path d="M1 1l4 4 4-4" fill="none" stroke="#555" stroke-width="1.300"/></svg>
<svg class="i" style="left:929px;top:181px"><use href="#st2"/></svg>
<svg style="left:876px;top:256px;width:8px;height:10px"><path d="M2 1l4 4-4 4" fill="none" stroke="#aaa" stroke-width="1.300"/></svg>
<svg class="i" style="left:892px;top:253px"><use href="#st2"/></svg>
<!-- expr scrollbars -->
<div style="left:868px;top:358px;width:1031px;height:15px;background:#f0f0f0"></div>
<div style="left:885px;top:358px;width:981px;height:15px;background:#cdcdcd"></div>
<svg style="left:873px;top:361px;width:8px;height:10px"><path d="M6 1L2 5l4 4" fill="none" stroke="#555" stroke-width="1.300"/></svg>
<svg style="left:1887px;top:361px;width:8px;height:10px"><path d="M2 1l4 4-4 4" fill="none" stroke="#555" stroke-width="1.300"/></svg>
<div style="left:1900px;top:102px;width:16px;height:271px;background:#f0f0f0"></div>
<div style="left:1900px;top:163px;width:16px;height:177px;background:#cdcdcd"></div>
<svg style="left:1903px;top:107px;width:10px;height:8px"><path d="M1 6l4-4 4 4" fill="none" stroke="#555" stroke-width="1.300"/></svg>
<svg style="left:1903px;top:345px;width:10px;height:8px"><path d="M1 2l4 4 4-4" fill="none" stroke="#555" stroke-width="1.300"/></svg>

<!-- Editor pane -->
<div style="left:3px;top:380px;width:1913px;height:433px;background:#fff;border:1px solid #b4c0d6;box-sizing:border-box;border-radius:4px 4px 0 0"></div>
<div style="left:3px;top:380px;width:1913px;height:26px;background:#d9e3f2;border:1px solid #acb8cf;box-sizing:border-box;border-radius:4px 4px 0 0"></div>
<div style="left:3px;top:380px;width:119px;height:27px;background:#fff;border:1px solid #acb8cf;border-bottom:0;box-sizing:border-box;border-radius:4px 4px 0 0"></div>
<svg class="i" style="left:8px;top:386px"><use href="#cf"/></svg>
<b class="et" style="left:27px">proj_lab01b.c</b>
<svg class="i" style="left:102px;top:387px;width:14px;height:14px"><use href="#cl"/></svg>
<svg class="i" style="left:126px;top:385px"><use href="#hf"/></svg><b class="et" style="left:145px">svgen.h</b>
<svg class="i" style="left:216px;top:385px"><use href="#hf"/></svg><b class="et" style="left:235px">ctrl.h</b>
<svg class="i" style="left:292px;top:385px"><use href="#hf"/></svg><b class="et" style="left:312px">ctrl_obj.h</b>
<svg class="i" style="left:389px;top:385px"><use href="#hf"/></svg><b class="et" style="left:409px">hal_obj.h</b>
<svg class="i" style="left:487px;top:385px"><use href="#hf"/></svg><b class="et" style="left:506px">math.h</b>
<svg class="i" style="left:574px;top:385px"><use href="#hf"/></svg><b class="et" style="left:594px">IQmathLib.h</b>
<svg class="i" style="left:688px;top:385px"><use href="#hf"/></svg><b class="et" style="left:708px">ctrl_states.h</b>
<svg class="i" style="left:800px;top:385px"><use href="#hf"/></svg><b class="et" style="left:820px">pwm.h</b>
<svg class="i" style="left:885px;top:385px"><use href="#hf"/></svg><b class="et" style="left:905px">userParams.h</b>
<svg class="i" style="left:1005px;top:385px"><use href="#hf"/></svg><b class="et" style="left:1025px">svgen.h</b>
<svg class="i" style="left:1096px;top:385px"><use href="#hf"/></svg><b class="et" style="left:1116px">clarke.h</b>
<svg class="i" style="left:1186px;top:385px"><use href="#hf"/></svg><b class="et" style="left:1206px">svgen.h</b>
<svg class="i" style="left:1276px;top:385px"><use href="#hf"/></svg><b class="et" style="left:1296px">clarke.h</b>
<svg class="i" style="left:1366px;top:385px"><use href="#hf"/></svg><b class="et" style="left:1385px">svgen.h</b>
<svg class="i" style="left:1456px;top:385px"><use href="#hf"/></svg><b class="et" style="left:1476px">svgen.h</b>
<svg class="i" style="left:1546px;top:385px"><use href="#hf"/></svg><b class="et" style="left:1566px">svgen.h</b>
<svg class="i" style="left:1636px;top:385px"><use href="#hf"/></svg><b class="et" style="left:1655px">svgen.h</b>
<svg class="i" style="left:1726px;top:385px"><use href="#hf"/></svg><b class="et" style="left:1746px">svgen.h</b>
<svg class="i" style="left:1868px;top:381px"><use href="#mn"/></svg>
<svg class="i" style="left:1892px;top:384px"><use href="#mx"/></svg>

<div style="left:4px;top:406px;width:12px;height:387px;background-color:#a9cdf0;background-image:conic-gradient(#4f96dc 25%,#a9cdf0 0 50%,#4f96dc 0 75%,#a9cdf0 0);background-size:2px 2px"></div>
<div style="left:40px;top:569px;width:1848px;height:15px;background:#e8f2fe"></div>
<pre style="left:16px;top:406px;color:#787878">605
606
607
608
609
610
611
612
613
614
615
616
617
618
619
620
621
622
623
624
625
626
627
628
629
630</pre>
<pre style="left:40px;top:406px;color:#000">

         <span class="c" style="position:static">// run the inverse Park module</span>
         IPARK_run(controller_obj-&gt;<span class="f" style="position:static">iparkHandle</span>,CTRL_getVdq_out_addr(ctrlHandle),CTRL_getVab_out_addr(ctrlHandle));

         <span class="c" style="position:static">// run the space Vector Generator (SVGEN) module</span>
         SVGEN_run(controller_obj-&gt;<span class="f" style="position:static">svgenHandle</span>,CTRL_getVab_out_addr(ctrlHandle),&amp;(gPwmData.<span class="f" style="position:static">Tabc</span>));
         g_temp1++;
        }
      <span class="k" style="position:static">else if</span>(ctrlState == <span class="e" style="position:static">CTRL_State_OffLine</span>)
        {
          <span class="c" style="position:static">// run the <span class="w" style="position:static">offline</span> controller</span>
          CTRL_runOffLine(ctrlHandle,halHandle,&amp;gAdcData,&amp;gPwmData);
        }
      <span class="k" style="position:static">else if</span>(ctrlState == <span class="e" style="position:static">CTRL_State_Idle</span>)
        {
          <span class="c" style="position:static">// set all <span class="w" style="position:static">pwm</span> outputs to zero</span>
          gPwmData.<span class="f" style="position:static">Tabc</span>.<span class="f" style="position:static">value</span>[0] = _IQ(0.0);
          gPwmData.<span class="f" style="position:static">Tabc</span>.<span class="f" style="position:static">value</span>[1] = _IQ(0.0);
          gPwmData.<span class="f" style="position:static">Tabc</span>.<span class="f" style="position:static">value</span>[2] = _IQ(0.0);
        }
    }
  <span class="k" style="position:static">else</span>
    {
      <span class="c" style="position:static">// increment the <span class="w" style="position:static">isr</span> count</span>
      CTRL_incrCounter_isr(ctrlHandle);
    }</pre>
<!-- editor scrollbars -->
<div style="left:1888px;top:406px;width:17px;height:389px;background:#f0f0f0"></div>
<div style="left:1888px;top:714px;width:16px;height:16px;background:#cdcdcd"></div>
<svg style="left:1890px;top:411px;width:10px;height:8px"><path d="M1 6l4-4 4 4" fill="none" stroke="#555" stroke-width="1.300"/></svg>
<svg style="left:1890px;top:782px;width:10px;height:8px"><path d="M1 2l4 4 4-4" fill="none" stroke="#555" stroke-width="1.300"/></svg>
<div style="left:1906px;top:486px;width:10px;height:3px;background:#e8e0d0"></div>
<div style="left:1906px;top:578px;width:10px;height:2px;background:#eee6d8"></div>
<div style="left:1906px;top:736px;width:10px;height:3px;background:#f0dcc0"></div>
<div style="left:4px;top:795px;width:1911px;height:17px;background:#f0f0f0"></div>
<div style="left:4px;top:795px;width:33px;height:17px;background:#fafafa"></div>
<svg style="left:42px;top:799px;width:8px;height:10px"><path d="M6 1L2 5l4 4" fill="none" stroke="#bbb" stroke-width="1.300"/></svg>
<svg style="left:1873px;top:799px;width:8px;height:10px"><path d="M2 1l4 4-4 4" fill="none" stroke="#bbb" stroke-width="1.300"/></svg>

<!-- Console pane -->
<div style="left:3px;top:818px;width:953px;height:189px;background:#fff"></div>
<div class="band" style="left:3px;top:818px;width:953px;height:25px"></div>
<div class="tab" style="left:3px;top:818px;width:92px;height:25px"></div>
<svg class="i" style="left:7px;top:822px"><use href="#tm"/></svg>
<b style="left:26px;top:823px;line-height:15px">Console</b>
<svg class="i" style="left:76px;top:824px;width:14px;height:14px"><use href="#cl"/></svg>
<svg class="i" style="left:633px;top:821px"><use href="#dn"/></svg>
<svg class="i" style="left:656px;top:821px"><use href="#up"/></svg>
<div class="sel" style="left:676px;top:819px;width:23px;height:21px"></div><svg class="i" style="left:679px;top:821px"><use href="#lk"/></svg>
<div class="s" style="left:702px;top:821px;height:18px"></div>
<svg class="i" style="left:711px;top:821px"><use href="#cs"/></svg>
<svg class="i" style="left:734px;top:821px"><use href="#cb"/></svg>
<div class="sel" style="left:753px;top:819px;width:23px;height:21px"></div><svg class="i" style="left:757px;top:821px"><use href="#ln"/></svg>
<svg class="i" style="left:780px;top:821px"><use href="#ds"/></svg>
<div class="s" style="left:802px;top:821px;height:18px"></div>
<svg class="i" style="left:811px;top:821px"><use href="#pn2"/></svg>
<svg class="i" style="left:835px;top:821px"><use href="#tm"/></svg><div class="dd" style="left:860px;top:828px"></div>
<svg class="i" style="left:873px;top:821px"><use href="#nw"/></svg><div class="dd" style="left:898px;top:828px"></div>
<svg class="i" style="left:910px;top:820px"><use href="#mn"/></svg>
<svg class="i" style="left:933px;top:822px"><use href="#mx"/></svg>
<b style="left:4px;top:843px;line-height:16px;letter-spacing:-.2px">CDT Build Console [proj_lab01b]</b>
<div style="left:4px;top:858px;width:951px;height:1px;background:#a0a0a0"></div>
<pre style="left:6px;top:861px;color:#000">

**** Build of configuration Release for project proj_lab01b ****

"C:\\ti\\ccsv7\\utils\\bin\\gmake" -k all
gmake: Nothing to be done for 'all'.

**** Build Finished ****</pre>
<div style="left:940px;top:860px;width:16px;height:147px;background:#f4f4f4"></div>
<svg style="left:943px;top:866px;width:10px;height:8px"><path d="M1 6l4-4 4 4" fill="none" stroke="#bbb" stroke-width="1.300"/></svg>
<svg style="left:943px;top:994px;width:10px;height:8px"><path d="M1 2l4 4 4-4" fill="none" stroke="#bbb" stroke-width="1.300"/></svg>

<!-- Graph pane -->
<div style="left:963px;top:818px;width:953px;height:189px;background:#fff"></div>
<div class="band" style="left:963px;top:818px;width:953px;height:25px"></div>
<div class="tab" style="left:963px;top:818px;width:121px;height:25px"></div>
<svg class="i" style="left:967px;top:822px"><use href="#t1"/></svg>
<b style="left:987px;top:823px;line-height:15px">DualTimeB -4</b>
<svg class="i" style="left:1065px;top:824px;width:14px;height:14px"><use href="#cl"/></svg>
<svg class="i" style="left:1090px;top:822px"><use href="#t1"/></svg>
<b style="left:1109px;top:823px;line-height:15px">DualTimeA -4</b>
<div class="sel" style="left:1365px;top:819px;width:23px;height:21px"></div><svg class="i" style="left:1369px;top:821px"><use href="#hc"/></svg>
<svg class="i" style="left:1391px;top:821px"><use href="#al"/></svg>
<svg class="i" style="left:1414px;top:821px"><use href="#ar"/></svg>
<svg class="i" style="left:1438px;top:821px"><use href="#rl"/></svg><div class="dd" style="left:1464px;top:828px"></div>
<svg class="i" style="left:1476px;top:821px"><use href="#ap"/></svg><div class="dd" style="left:1502px;top:828px"></div>
<svg class="i" style="left:1514px;top:821px"><use href="#zi"/></svg>
<svg class="i" style="left:1536px;top:821px"><use href="#zo"/></svg>
<svg class="i" style="left:1560px;top:821px"><use href="#zf"/></svg><div class="dd" style="left:1586px;top:828px"></div>
<div class="s" style="left:1596px;top:821px;height:18px"></div>
<svg class="i" style="left:1605px;top:821px"><use href="#s2"/></svg>
<div class="sel" style="left:1625px;top:819px;width:23px;height:21px;background:#dcecf9"></div><svg class="i" style="left:1628px;top:821px"><use href="#hh"/></svg>
<svg class="i" style="left:1651px;top:821px"><use href="#ud"/></svg>
<svg class="i" style="left:1675px;top:821px"><use href="#rx"/></svg>
<svg class="i" style="left:1698px;top:821px"><use href="#gp"/></svg>
<div class="s" style="left:1719px;top:821px;height:18px"></div>
<svg class="i" style="left:1728px;top:821px"><use href="#bn"/></svg>
<svg class="i" style="left:1753px;top:821px"><use href="#aa"/></svg><div class="dd" style="left:1778px;top:828px"></div>
<div class="sel" style="left:1786px;top:819px;width:23px;height:21px"></div><svg class="i" style="left:1790px;top:821px"><use href="#cb"/></svg>
<div class="s" style="left:1812px;top:821px;height:18px"></div>
<svg class="i" style="left:1821px;top:821px"><use href="#pi"/></svg>
<svg class="i" style="left:1849px;top:819px"><use href="#vm"/></svg>
<svg class="i" style="left:1870px;top:820px"><use href="#mn"/></svg>
<svg class="i" style="left:1893px;top:822px"><use href="#mx"/></svg>

<svg style="left:963px;top:843px;width:953px;height:140px">
<defs>
<pattern id="mnt" x="58" y="0" width="11.18" height="6" patternUnits="userSpaceOnUse"><rect width="1" height="4" fill="#000"/></pattern>
<pattern id="mjt" x="58" y="0" width="55.9" height="8" patternUnits="userSpaceOnUse"><rect width="1" height="8" fill="#000"/></pattern>
</defs>
<rect x="58" y="122" width="894" height="1" fill="#000"/>
<rect x="57.500" y="0" width="1" height="123" fill="#000"/>
<rect x="58" y="123" width="894" height="4" fill="url(#mnt)"/>
<g transform="translate(0,123)"><rect x="58" y="0" width="894" height="7" fill="url(#mjt)"/></g>
<path d="M51 12h7M51 36.500h7M51 61h7M51 85h7M51 109h7M54 24h4M54 48.500h4M54 73h4M54 97h4" stroke="#000" fill="none"/>
<rect x="58" y="56" width="894" height="1" fill="#0000d0"/>
</svg>
<b class="yl" style="top:848px">0.4</b><b class="yl" style="top:872px">0.2</b><b class="yl" style="top:897px">0</b><b class="yl" style="left:988px;top:921px">-0.2</b><b class="yl" style="left:988px;top:945px">-0.4</b>
<b class="ch" style="left:1021px">0</b><b class="ch" style="left:1077px">+25</b><b class="ch" style="left:1133px">+50</b><b class="ch" style="left:1189px">+75</b><b class="ch" style="left:1245px">+100</b><b class="ch" style="left:1301px">+125</b><b class="ch" style="left:1356px">+150</b><b class="ch" style="left:1412px">+175</b><b class="ch" style="left:1468px">+200</b><b class="ch" style="left:1524px">+225</b><b class="ch" style="left:1580px">+250</b><b class="ch" style="left:1636px">+275</b><b class="ch" style="left:1692px">+300</b><b class="ch" style="left:1748px">+325</b><b class="ch" style="left:1804px">+350</b><b class="ch" style="left:1860px">+375</b>
<b style="left:1468px;top:992px;transform:translateX(-50%);font-weight:bold;font-style:italic">sample</b>

<!-- status bar -->
<div style="left:0;top:1007px;width:1920px;height:29px;background:#e6e6e6"></div>
<div style="left:1229px;top:1009px;width:29px;height:24px;border:1px solid #cfcfcf;border-right-color:#9a9a9a;border-bottom-color:#9a9a9a;box-sizing:border-box"></div>
<svg class="i" style="left:1236px;top:1013px"><use href="#stat"/></svg>
<div style="left:1261px;top:1009px;width:1px;height:24px;background:#b8b8b8"></div>
<div style="left:1365px;top:1009px;width:1px;height:24px;background:#b8b8b8"></div>
<div style="left:1463px;top:1009px;width:1px;height:24px;background:#b8b8b8"></div>
<b style="left:1269px;top:1013px;line-height:15px">Writable</b>
<b style="left:1373px;top:1013px;line-height:15px;letter-spacing:-.15px">Smart Insert</b>
<b style="left:1471px;top:1013px;line-height:15px;letter-spacing:-.5px">616 : 69</b>
<div class="g" style="left:1559px;top:1013px;height:18px"></div>
<div class="g" style="left:1850px;top:1013px;height:18px"></div>
<div class="g" style="left:1870px;top:1013px;height:18px"></div>
</body></html>
